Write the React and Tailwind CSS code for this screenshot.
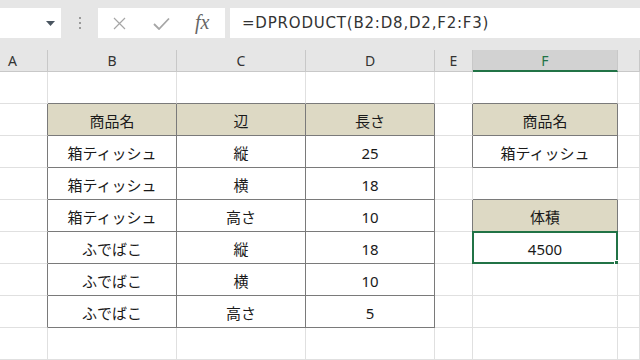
const COLS = ["A", "B", "C", "D", "E", "F", "G"];

// rows 1..9; value is cell content, "h" marks header fill
const ROWS = [
  {},
  { B: ["商品名", "h"], C: ["辺", "h"], D: ["長さ", "h"], F: ["商品名", "h"] },
  { B: ["箱ティッシュ"], C: ["縦"], D: ["25"], F: ["箱ティッシュ"] },
  { B: ["箱ティッシュ"], C: ["横"], D: ["18"] },
  { B: ["箱ティッシュ"], C: ["高さ"], D: ["10"], F: ["体積", "h"] },
  { B: ["ふでばこ"], C: ["縦"], D: ["18"], F: ["4500"] },
  { B: ["ふでばこ"], C: ["横"], D: ["10"] },
  { B: ["ふでばこ"], C: ["高さ"], D: ["5"] },
  {},
];

const inTable = (r, c) => {
  const row = ROWS[r];
  return !!(row && row[COLS[c]]);
};

function Cell({ r, c }) {
  const cell = ROWS[r][COLS[c]];
  const darkRight = inTable(r, c) || inTable(r, c + 1);
  const darkBottom = inTable(r, c) || inTable(r + 1, c);
  const selected = r === 5 && COLS[c] === "F";
  return (
    <div
      className={[
        "relative flex items-center justify-center pt-[3px] text-[15px] text-[#1a1a1a]",
        darkRight ? "border-r border-r-[#7a7a7a]" : "border-r border-r-[#e0e0e0]",
        darkBottom ? "border-b border-b-[#7a7a7a]" : "border-b border-b-[#e0e0e0]",
        cell && cell[1] === "h" ? "bg-[#ddd9c4]" : "bg-white",
      ].join(" ")}
    >
      {cell ? cell[0] : ""}
      {selected && (
        <div className="absolute -left-px -top-px -right-px -bottom-px border-2 border-[#217346]">
          <div className="absolute -right-[4px] -bottom-[4px] w-[6px] h-[6px] bg-[#217346] border border-white" />
        </div>
      )}
    </div>
  );
}

export default function App() {
  return (
    <div
      className="w-[640px] h-[360px] overflow-hidden bg-white"
      style={{ fontFamily: '"Noto Sans", "Noto Sans CJK JP", sans-serif' }}
    >
      {/* Formula bar */}
      <div className="h-[50px] bg-[#e6e6e6] flex items-start pt-2 gap-0">
        <div className="w-[61px] h-[30px] bg-white flex items-center justify-end pr-[6px]">
          <svg width="9" height="5" viewBox="0 0 9 5">
            <path d="M0 0h9L4.5 5z" fill="#4a5560" />
          </svg>
        </div>
        <div className="w-[37px] h-[30px] flex flex-col items-center justify-center gap-[3px] pl-[1px]">
          <div className="w-[2px] h-[2px] bg-[#9a9a9a]" />
          <div className="w-[2px] h-[2px] bg-[#9a9a9a]" />
          <div className="w-[2px] h-[2px] bg-[#9a9a9a]" />
        </div>
        <div className="w-[127px] h-[30px] bg-white flex items-center">
          <svg className="ml-[15px]" width="13" height="13" viewBox="0 0 13 13">
            <path d="M1 1l11 11M12 1L1 12" stroke="#a6a6a6" strokeWidth="1.2" fill="none" />
          </svg>
          <svg className="ml-[27px]" width="17" height="13" viewBox="0 0 17 13">
            <path d="M1 7l5 5L16 1.5" stroke="#a6a6a6" strokeWidth="1.8" fill="none" />
          </svg>
          <span
            className="ml-[25px] -mt-[2px] text-[20px] italic text-[#666]"
            style={{ fontFamily: '"Liberation Serif", serif' }}
          >
            fx
          </span>
        </div>
        <div
          className="ml-[5px] flex-1 h-[30px] bg-white flex items-center pl-[12px] text-[15px] tracking-[0.8px] text-[#333]"
          style={{ fontFamily: '"DejaVu Sans", sans-serif' }}
        >
          =DPRODUCT(B2:D8,D2,F2:F3)
        </div>
      </div>

      {/* Sheet */}
      <div className="grid grid-cols-[48px_129px_129px_129px_38px_145px_1fr] grid-rows-[22px_repeat(9,32px)]">
        {COLS.map((c) =>
          c === "F" ? (
            <div
              key={c}
              className="flex items-center justify-center bg-[#d2d2d2] border-b-2 border-b-[#217346] border-r border-r-[#c8c8c8] text-[14px] text-[#217346]"
            >
              {c}
            </div>
          ) : (
            <div
              key={c}
              className={
                c === "A"
                  ? "flex items-center justify-start pl-2 bg-[#e6e6e6] border-b border-b-[#c8c8c8] border-r border-r-[#c8c8c8] text-[14px] text-[#333]"
                  : "flex items-center justify-center bg-[#e6e6e6] border-b border-b-[#c8c8c8] border-r border-r-[#c8c8c8] text-[14px] text-[#333]"
              }
            >
              {c === "G" ? "" : c}
            </div>
          )
        )}
        {ROWS.map((row, r) => COLS.map((c, ci) => <Cell key={r + c} r={r} c={ci} />))}
      </div>
    </div>
  );
}
